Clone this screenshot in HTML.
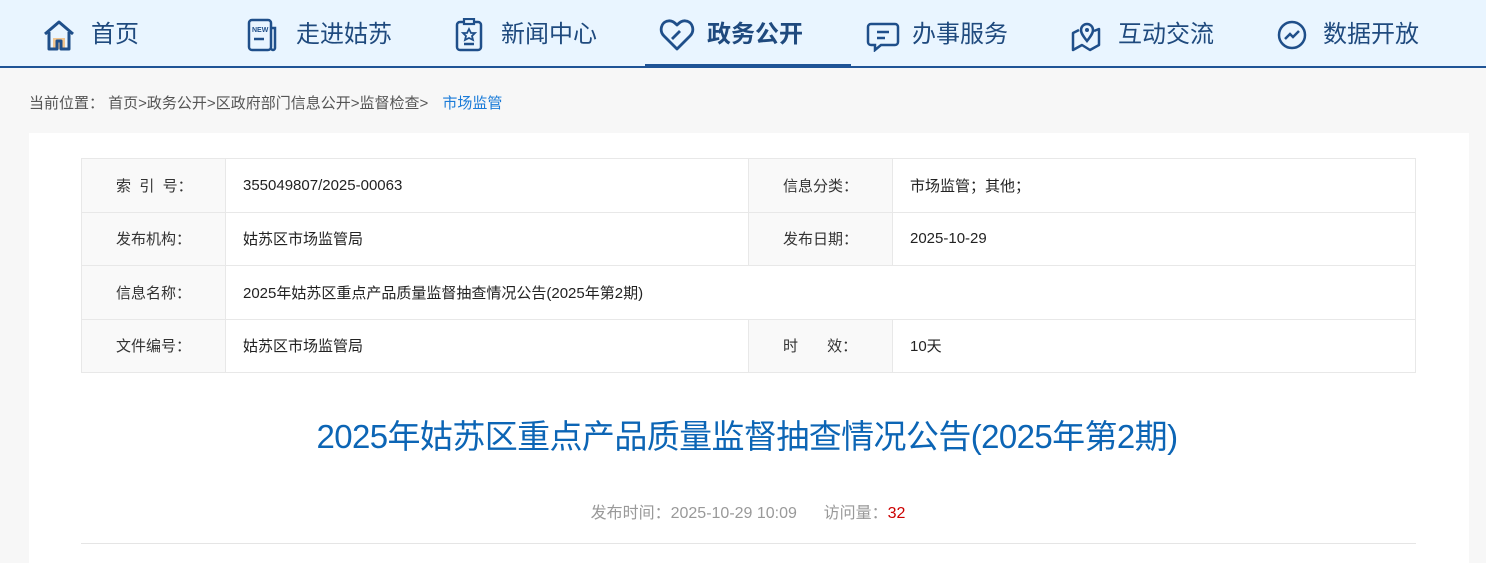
<!DOCTYPE html>
<html><head><meta charset="utf-8"><style>
*{margin:0;padding:0;box-sizing:border-box}
body{width:1486px;height:559px;overflow:hidden;background:#f7f7f7;font-family:"Liberation Sans","Noto Sans CJK SC",sans-serif;position:relative}
.nav{position:absolute;left:0;top:0;width:1486px;height:68px;background:#e9f5ff;border-bottom:2px solid #1f5496}
.act{position:absolute;left:645px;top:64px;width:206px;height:4px;background:#1f5496}
.it{position:absolute;top:19px;font-size:24px;color:#1f4a7e;line-height:32px;white-space:nowrap}
.ic{position:absolute;top:18px}
.bc{position:absolute;left:29px;top:92px;font-size:15px;color:#555;white-space:nowrap}
.bc b{font-weight:normal;color:#1a7bd8;margin-left:10px}
.card{position:absolute;left:29px;top:133px;width:1440px;height:430px;background:#fff}
table{position:absolute;left:81px;top:158px;width:1335px;border-collapse:collapse;font-size:15px;color:#222}
td{border:1px solid #e8e8e8;height:53.5px;padding:0 0 0 17px}
td.l{background:#f9f9f9;width:144px;padding-left:34px;color:#333}
h1{position:absolute;left:4px;width:1486px;top:410px;text-align:center;font-weight:normal;font-size:33px;color:#0c65b5;letter-spacing:-0.6px}
.meta{position:absolute;left:0;width:1496px;top:499px;text-align:center;font-size:16px;color:#999}
.meta span{color:#c00}
.hr{position:absolute;left:81px;top:543px;width:1335px;height:1px;background:#e5e5e5}
</style></head><body>
<div class="nav"></div><div class="act"></div>
<svg class="ic" style="left:42px" width="34" height="34" viewBox="0 0 34 34"><path d="M11 31V20h12v11" fill="#f0c590"/><path d="M3 16L17 4l14 12M7 14v17h8v-8h4v8h8V14" fill="none" stroke="#1f4f8a" stroke-width="3" stroke-linejoin="round"/></svg>
<div class="it" style="left:91px">首页</div>
<svg class="ic" style="left:247px" width="32" height="34" viewBox="0 0 32 34"><rect x="2" y="2" width="22" height="30" rx="3" fill="none" stroke="#1f4f8a" stroke-width="2.5"/><path d="M24 10h4v20a2 2 0 0 1-4 0" fill="none" stroke="#1f4f8a" stroke-width="2.5"/><text x="5" y="14" font-size="7" font-family="Liberation Sans" font-weight="bold" fill="#1f4f8a">NEW</text><path d="M7 21h10" stroke="#1f4f8a" stroke-width="2.5"/></svg>
<div class="it" style="left:296px">走进姑苏</div>
<svg class="ic" style="left:454px" width="32" height="34" viewBox="0 0 32 34"><rect x="3" y="4" width="24" height="28" rx="3" fill="none" stroke="#1f4f8a" stroke-width="2.5"/><rect x="10" y="1" width="10" height="5" fill="#e9f5ff" stroke="#1f4f8a" stroke-width="2.2"/><path d="M15 11l2 4h4l-3 3 1 4-4-2-4 2 1-4-3-3h4z" fill="none" stroke="#1f4f8a" stroke-width="1.8"/><path d="M10 26h10" stroke="#1f4f8a" stroke-width="2.5"/></svg>
<div class="it" style="left:501px">新闻中心</div>
<svg class="ic" style="left:659px" width="36" height="34" viewBox="0 0 36 34"><path d="M18 31L5 18C0 13 2 4 9 3c4-1 7 2 9 4 2-2 5-5 9-4 7 1 9 10 4 15z" fill="none" stroke="#1f4f8a" stroke-width="2.8" stroke-linejoin="round"/><path d="M13 21l8-8" stroke="#1f4f8a" stroke-width="2.8"/></svg>
<div class="it" style="left:707px;font-weight:bold">政务公开</div>
<svg class="ic" style="left:865px" width="36" height="34" viewBox="0 0 36 34"><path d="M6 6h24a3 3 0 0 1 3 3v15a3 3 0 0 1-3 3H16l-6 5v-5H6a3 3 0 0 1-3-3V9a3 3 0 0 1 3-3z" fill="none" stroke="#1f4f8a" stroke-width="2.5"/><path d="M12 14h12M12 20h8" stroke="#1f4f8a" stroke-width="2.5"/></svg>
<div class="it" style="left:912px">办事服务</div>
<svg class="ic" style="left:1070px" width="34" height="34" viewBox="0 0 34 34"><path d="M9 12L3 15v17l9-5 8 5 9-5V11l-5 2" fill="none" stroke="#1f4f8a" stroke-width="2.5" stroke-linejoin="round"/><path d="M17 23c-4-5-6-8-6-11a6 6 0 0 1 12 0c0 3-2 6-6 11z" fill="none" stroke="#1f4f8a" stroke-width="2.5"/><circle cx="17" cy="12" r="2" fill="#1f4f8a"/></svg>
<div class="it" style="left:1118px">互动交流</div>
<svg class="ic" style="left:1276px" width="34" height="34" viewBox="0 0 34 34"><circle cx="16" cy="17" r="13" fill="none" stroke="#1f4f8a" stroke-width="2.5"/><path d="M9 21l5-5 3 3 6-6" fill="none" stroke="#1f4f8a" stroke-width="2.5"/></svg>
<div class="it" style="left:1323px">数据开放</div>
<div class="bc">当前位置： 首页&gt;政务公开&gt;区政府部门信息公开&gt;监督检查&gt; <b>市场监管</b></div>
<div class="card"></div>
<table>
<tr><td class="l">索&nbsp; 引&nbsp; 号：</td><td style="width:523px">355049807/2025-00063</td><td class="l">信息分类：</td><td>市场监管；其他；</td></tr>
<tr><td class="l">发布机构：</td><td>姑苏区市场监管局</td><td class="l">发布日期：</td><td>2025-10-29</td></tr>
<tr><td class="l">信息名称：</td><td colspan="3">2025年姑苏区重点产品质量监督抽查情况公告(2025年第2期)</td></tr>
<tr><td class="l">文件编号：</td><td>姑苏区市场监管局</td><td class="l">时&nbsp;&nbsp;&nbsp;&nbsp;&nbsp;&nbsp; 效：</td><td>10天</td></tr>
</table>
<h1>2025年姑苏区重点产品质量监督抽查情况公告(2025年第2期)</h1>
<div class="meta">发布时间：2025-10-29 10:09 &nbsp;&nbsp;&nbsp;&nbsp; 访问量：<span>32</span></div>
<div class="hr"></div>
</body></html>
